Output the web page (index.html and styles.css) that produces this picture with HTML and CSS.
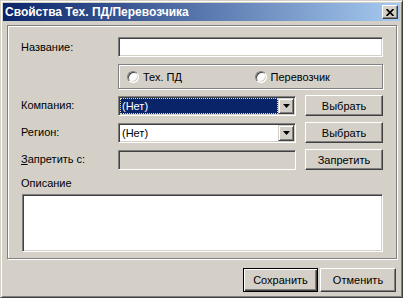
FILE: index.html
```html
<!DOCTYPE html>
<html lang="ru">
<head>
  <meta charset="UTF-8" />
  <title>Свойства Тех. ПД/Перевозчика</title>
  <link rel="stylesheet" href="styles.css">
</head>
<body>
  <div class="window">
    <div class="titlebar">
      <span class="title">Свойства Тех. ПД/Перевозчика</span>
      <div class="close-btn">
        <svg width="8" height="7" viewBox="0 0 8 7"><path d="M0.5 0 L7.5 7 M7.5 0 L0.5 7" stroke="#000" stroke-width="1.7"/></svg>
      </div>
    </div>

    <div class="content">
      <div class="group">
        <div class="form">
          <label class="lbl">Название:</label>
          <div class="field wide"></div>

          <div class="radios wide">
            <label class="radio"><span class="dot"></span>Тех. ПД</label>
            <label class="radio"><span class="dot"></span>Перевозчик</label>
          </div>

          <label class="lbl">Компания:</label>
          <div class="field combo">
            <span class="value selected"><span>(Нет)</span></span>
            <span class="drop"><svg width="7" height="4" viewBox="0 0 7 4"><polygon points="0,0 7,0 3.5,4" fill="#000"/></svg></span>
          </div>
          <div class="btn">Выбрать</div>

          <label class="lbl">Регион:</label>
          <div class="field combo">
            <span class="value"><span>(Нет)</span></span>
            <span class="drop"><svg width="7" height="4" viewBox="0 0 7 4"><polygon points="0,0 7,0 3.5,4" fill="#000"/></svg></span>
          </div>
          <div class="btn">Выбрать</div>

          <label class="lbl"><u>З</u>апретить с:</label>
          <div class="field disabled"></div>
          <div class="btn">Запретить</div>

          <div class="notes">
            <label class="lbl">Описание</label>
            <div class="field memo"></div>
          </div>
        </div>
      </div>

      <div class="actions">
        <div class="btn default">Сохранить</div>
        <div class="btn">Отменить</div>
      </div>
    </div>
  </div>
</body>
</html>
```

FILE: styles.css
```css
* {
  margin: 0;
  padding: 0;
  box-sizing: border-box;
  font-family: "Liberation Sans", Arial, sans-serif;
  font-size: 11px;
}
body {
  background: #d4d0c8;
  color: #000;
}
.window {
  width: 403px;
  height: 298px;
  background: #d4d0c8;
  border: 1px solid;
  border-color: #d4d0c8 #404040 #404040 #d4d0c8;
  box-shadow: inset 1px 1px #fff, inset -1px -1px #808080;
  padding: 2px;
  display: flex;
  flex-direction: column;
}
.titlebar {
  height: 18px;
  display: flex;
  align-items: center;
  justify-content: space-between;
  padding: 0 2px 0 2px;
  background: linear-gradient(to right, #0a246a, #a6caf0);
}
.title {
  color: #fff;
  font-weight: bold;
  font-size: 12px;
}
.close-btn {
  width: 16px;
  height: 14px;
  display: flex;
  align-items: center;
  justify-content: center;
  background: #d4d0c8;
  border: 1px solid;
  border-color: #fff #404040 #404040 #fff;
  box-shadow: inset -1px -1px #808080;
}

.content {
  flex: 1;
  padding: 4px 3px 0 4px;
  display: flex;
  flex-direction: column;
}
.group {
  border: 1px solid #808080;
  box-shadow: inset 1px 1px #fff, 1px 1px #fff;
  padding: 11px 12px 6px 13px;
}
.form {
  display: grid;
  grid-template-columns: 88px 178px 78px;
  column-gap: 9px;
  row-gap: 6px;
  align-items: center;
}
.lbl {
  line-height: 13px;
}
.wide {
  grid-column: 2 / 4;
}

/* 3D поля */
.field {
  height: 20px;
  background: #fff;
  border: 1px solid;
  border-color: #808080 #fff #fff #808080;
  box-shadow: inset 1px 1px #404040, inset -1px -1px #d4d0c8;
}
.field.disabled {
  background: #d4d0c8;
}
.combo {
  display: flex;
  padding: 1px;
}
.combo .value {
  flex: 1;
  padding: 1px;
  display: flex;
  align-items: center;
}
.combo .value span {
  padding: 0 1px;
}
.combo .value.selected {
  background: #0a246a;
  color: #fff;
  border: 1px dotted #e8e0a0;
  padding: 0;
}
.drop {
  width: 16px;
  display: flex;
  align-items: center;
  justify-content: center;
  background: #d4d0c8;
  border: 1px solid;
  border-color: #d4d0c8 #404040 #404040 #d4d0c8;
  box-shadow: inset 1px 1px #fff, inset -1px -1px #808080;
}

.radios {
  height: 25px;
  border: 1px solid #808080;
  box-shadow: inset 1px 1px #fff, 1px 1px #fff;
  display: grid;
  grid-template-columns: 1fr 1fr;
  align-items: center;
  padding-left: 8px;
  margin-top: 1px;
}
.radio {
  display: flex;
  align-items: center;
  gap: 4px;
}
.dot {
  width: 12px;
  height: 12px;
  border-radius: 50%;
  background: #fff;
  border: 1px solid;
  border-color: #808080 #fff #fff #808080;
  box-shadow: inset 1px 1px #404040, inset -1px -1px #d4d0c8;
}

.btn {
  height: 21px;
  display: flex;
  align-items: center;
  justify-content: center;
  background: #d4d0c8;
  border: 1px solid;
  border-color: #fff #404040 #404040 #fff;
  box-shadow: inset -1px -1px #808080, inset 1px 1px #d4d0c8;
  cursor: default;
}
.btn.default {
  border: 1px solid #000;
  box-shadow: inset 1px 1px #fff, inset -1px -1px #404040, inset -2px -2px #808080;
}

.notes {
  grid-column: 1 / 4;
  display: flex;
  flex-direction: column;
  gap: 4px;
  margin-top: 1px;
}
.field.memo {
  height: 58px;
  margin-left: 1px;
}

.actions {
  margin-top: 9px;
  margin-right: 1px;
  display: flex;
  justify-content: flex-end;
  gap: 2px;
}
.actions .btn {
  height: 24px;
  width: 75px;
}
.actions .btn + .btn {
  width: 76px;
}
```
